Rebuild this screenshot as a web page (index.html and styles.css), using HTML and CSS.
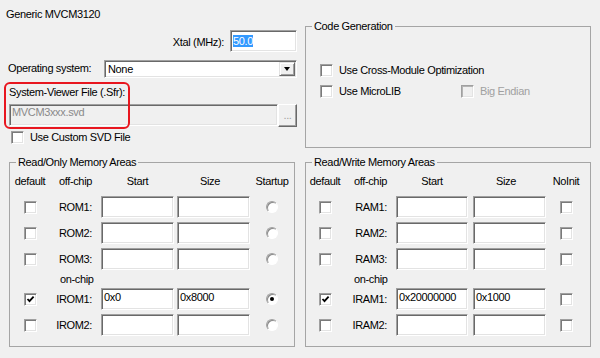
FILE: index.html
```html
<!DOCTYPE html>
<html lang="en">
<head>
    <meta charset="UTF-8">
    <title>Options for Target - Device</title>
    <link rel="stylesheet" href="styles.css">
</head>
<body>
<div class="dialog">
    <div class="top">
        <div class="target">
            <div class="device">Generic MVCM3120</div>

            <div class="xtal-row">
                <span class="xtal-label">Xtal (MHz):</span>
                <div class="field xtal"><span class="selected">50.0</span></div>
            </div>

            <div class="os-row">
                <span class="os-label">Operating system:</span>
                <div class="select">
                    <span class="select-value">None</span>
                    <span class="select-btn"><span class="arrow"></span></span>
                </div>
            </div>

            <div class="svf-label">System-Viewer File (.Sfr):</div>
            <div class="svf-row">
                <div class="field disabled svf-path">MVCM3xxx.svd</div>
                <div class="browse">...</div>
            </div>

            <div class="check-row svd">
                <span class="checkbox"></span><span>Use Custom SVD File</span>
            </div>

            <!-- annotation around the SVD file box -->
            <div class="callout"></div>
        </div>

        <fieldset class="group codegen">
            <legend>Code Generation</legend>
            <div class="opts">
                <div class="check-row">
                    <span class="checkbox"></span><span>Use Cross-Module Optimization</span>
                </div>
                <div class="opt-line">
                    <div class="check-row micro">
                        <span class="checkbox"></span><span>Use MicroLIB</span>
                    </div>
                    <div class="check-row off">
                        <span class="checkbox"></span><span>Big Endian</span>
                    </div>
                </div>
            </div>
        </fieldset>
    </div>

    <div class="memory">
        <fieldset class="group mem ro">
            <legend>Read/Only Memory Areas</legend>
            <div class="mem-grid">
                <div class="hd c-def">default</div>
                <div class="hd c-name">off-chip</div>
                <div class="hd c-start">Start</div>
                <div class="hd c-size">Size</div>
                <div class="hd c-opt">Startup</div>

                <div class="c-def"><span class="checkbox"></span></div>
                <div class="name">ROM1:</div>
                <div class="c-start"><div class="field"></div></div>
                <div class="c-size"><div class="field"></div></div>
                <div class="c-opt"><span class="radio"></span></div>

                <div class="c-def"><span class="checkbox"></span></div>
                <div class="name">ROM2:</div>
                <div class="c-start"><div class="field"></div></div>
                <div class="c-size"><div class="field"></div></div>
                <div class="c-opt"><span class="radio"></span></div>

                <div class="c-def"><span class="checkbox"></span></div>
                <div class="name">ROM3:</div>
                <div class="c-start"><div class="field"></div></div>
                <div class="c-size"><div class="field"></div></div>
                <div class="c-opt"><span class="radio"></span></div>

                <div class="onchip">on-chip</div>

                <div class="c-def"><span class="checkbox on"><svg width="9" height="9" viewBox="0 0 9 9"><path d="M1.5 4 L3.5 6.2 L7.6 1.6" fill="none" stroke="#000" stroke-width="1.8"/></svg></span></div>
                <div class="name">IROM1:</div>
                <div class="c-start"><div class="field">0x0</div></div>
                <div class="c-size"><div class="field">0x8000</div></div>
                <div class="c-opt"><span class="radio on"></span></div>

                <div class="c-def"><span class="checkbox"></span></div>
                <div class="name">IROM2:</div>
                <div class="c-start"><div class="field"></div></div>
                <div class="c-size"><div class="field"></div></div>
                <div class="c-opt"><span class="radio"></span></div>
            </div>
        </fieldset>

        <fieldset class="group mem rw">
            <legend>Read/Write Memory Areas</legend>
            <div class="mem-grid">
                <div class="hd c-def">default</div>
                <div class="hd c-name">off-chip</div>
                <div class="hd c-start">Start</div>
                <div class="hd c-size">Size</div>
                <div class="hd c-opt">NoInit</div>

                <div class="c-def"><span class="checkbox"></span></div>
                <div class="name">RAM1:</div>
                <div class="c-start"><div class="field"></div></div>
                <div class="c-size"><div class="field"></div></div>
                <div class="c-opt"><span class="checkbox"></span></div>

                <div class="c-def"><span class="checkbox"></span></div>
                <div class="name">RAM2:</div>
                <div class="c-start"><div class="field"></div></div>
                <div class="c-size"><div class="field"></div></div>
                <div class="c-opt"><span class="checkbox"></span></div>

                <div class="c-def"><span class="checkbox"></span></div>
                <div class="name">RAM3:</div>
                <div class="c-start"><div class="field"></div></div>
                <div class="c-size"><div class="field"></div></div>
                <div class="c-opt"><span class="checkbox"></span></div>

                <div class="onchip">on-chip</div>

                <div class="c-def"><span class="checkbox on"><svg width="9" height="9" viewBox="0 0 9 9"><path d="M1.5 4 L3.5 6.2 L7.6 1.6" fill="none" stroke="#000" stroke-width="1.8"/></svg></span></div>
                <div class="name">IRAM1:</div>
                <div class="c-start"><div class="field">0x20000000</div></div>
                <div class="c-size"><div class="field">0x1000</div></div>
                <div class="c-opt"><span class="checkbox"></span></div>

                <div class="c-def"><span class="checkbox"></span></div>
                <div class="name">IRAM2:</div>
                <div class="c-start"><div class="field"></div></div>
                <div class="c-size"><div class="field"></div></div>
                <div class="c-opt"><span class="checkbox"></span></div>
            </div>
        </fieldset>
    </div>
</div>
</body>
</html>
```

FILE: styles.css
```css
* {
    margin: 0;
    padding: 0;
    box-sizing: border-box;
}

body {
    background: #f0f0f0;
    font-family: "Liberation Sans", Arial, sans-serif;
    font-size: 11px;
    line-height: 13px;
    letter-spacing: -0.35px;
    color: #000;
    width: 600px;
    height: 358px;
    overflow: hidden;
}

/* sunken 3D edit box */
.field {
    height: 22px;
    background: #fff;
    border: 1px solid;
    border-color: #a0a0a0 #fff #fff #a0a0a0;
    box-shadow: inset 1px 1px 0 #696969, inset -1px -1px 0 #e3e3e3;
    padding: 2px 2px 0;
    white-space: nowrap;
    overflow: hidden;
}

.field.disabled {
    background: #f0f0f0;
    color: #8a8a8a;
}

.checkbox {
    width: 13px;
    height: 13px;
    flex: none;
    display: flex;
    align-items: center;
    justify-content: center;
    background: #fff;
    border: 1px solid;
    border-color: #a0a0a0 #fff #fff #a0a0a0;
    box-shadow: inset 1px 1px 0 #7a7a7a, inset -1px -1px 0 #e3e3e3;
}

.radio {
    display: block;
    position: relative;
    width: 12px;
    height: 12px;
    border-radius: 50%;
    background: #fff;
    border: 1px solid;
    border-color: #a0a0a0 #fff #fff #a0a0a0;
    box-shadow: inset 1px 1px 0 #8a8a8a;
}

.radio.on::after {
    content: "";
    position: absolute;
    left: 3px;
    top: 3px;
    width: 4px;
    height: 4px;
    border-radius: 50%;
    background: #000;
}

.check-row {
    display: flex;
    align-items: center;
    gap: 6px;
    height: 13px;
    white-space: nowrap;
}

/* top area */
.top {
    display: grid;
    grid-template-columns: 305px 286px;
    height: 148px;
}

.target {
    position: relative;
}

.device {
    margin: 8px 0 0 6px;
}

.xtal-row {
    display: flex;
    justify-content: flex-end;
    align-items: flex-start;
    margin-top: 9px;
    padding-right: 8px;
}

.xtal-label {
    margin: 6px 6px 0 0;
}

.xtal {
    width: 67px;
    padding-top: 4px;
}

.selected {
    display: inline-block;
    vertical-align: top;
    line-height: 12px;
    background: #3399ff;
    color: #fff;
}

.os-row {
    display: flex;
    align-items: flex-start;
    margin-top: 8px;
    padding: 0 8px;
}

.os-label {
    margin-top: 2px;
}

.select {
    margin-left: auto;
    width: 193px;
    height: 18px;
    display: flex;
    padding: 1px;
    background: #fff;
    border: 1px solid;
    border-color: #a0a0a0 #fff #fff #a0a0a0;
    box-shadow: inset 1px 1px 0 #696969, inset -1px -1px 0 #e3e3e3;
}

.select-value {
    flex: 1;
    padding: 1px 0 0 2px;
}

.select-btn {
    width: 16px;
    height: 14px;
    display: flex;
    align-items: center;
    justify-content: center;
    background: #f0f0f0;
    border: 1px solid;
    border-color: #e3e3e3 #696969 #696969 #e3e3e3;
    box-shadow: inset 1px 1px 0 #fff, inset -1px -1px 0 #a0a0a0;
}

.arrow {
    width: 0;
    height: 0;
    border-left: 3.5px solid transparent;
    border-right: 3.5px solid transparent;
    border-top: 4px solid #000;
}

.svf-label {
    margin: 8px 0 0 9px;
}

.svf-row {
    display: flex;
    margin-top: 5px;
    padding-left: 9px;
}

.svf-path {
    width: 269px;
    padding: 1px 2px 0;
}

.browse {
    width: 19px;
    height: 23px;
    padding-top: 4px;
    text-align: center;
    color: #a0a0a0;
    background: #f0f0f0;
    border: 1px solid;
    border-color: #fff #696969 #696969 #fff;
    box-shadow: inset -1px -1px 0 #a0a0a0;
}

.svd {
    margin-top: 4px;
    padding-left: 11px;
}

.callout {
    position: absolute;
    left: 4px;
    top: 82px;
    width: 126px;
    height: 47px;
    border: 2px solid #e8161f;
    border-radius: 6px;
}

/* group boxes */
.group {
    border: 1px solid #a5a5a5;
    padding: 0;
    margin: 0;
    min-width: 0;
}

.group legend {
    margin-left: 6px;
    padding: 0 2px;
    line-height: 13px;
}

.codegen {
    margin-top: 20px;
    height: 128px;
}

.opts {
    display: flex;
    flex-direction: column;
    gap: 8px;
    padding: 31px 0 0 14px;
}

.opt-line {
    display: flex;
}

.micro {
    width: 141px;
}

.off {
    color: #a0a0a0;
}

.off .checkbox {
    background: #f0f0f0;
    box-shadow: inset 1px 1px 0 #b4b4b4, inset -1px -1px 0 #e3e3e3;
}

/* memory areas */
.memory {
    display: grid;
    grid-template-columns: 286px 286px;
    column-gap: 10px;
    padding-left: 9px;
    margin-top: 8px;
}

.mem {
    height: 191px;
}

.mem-grid {
    display: grid;
    grid-template-rows: 19px 26px 26px 26px 14px 26px 26px;
    align-items: center;
    padding-top: 6px;
}

.ro .mem-grid {
    grid-template-columns: 40px 51px 76px 73px 44px;
}

.rw .mem-grid {
    grid-template-columns: 38px 52px 77px 73px 40px;
}

.hd {
    align-self: start;
    white-space: nowrap;
}

.c-def,
.c-opt {
    display: flex;
    justify-content: center;
}

.hd.c-name {
    text-align: right;
    padding-right: 9px;
}

.hd.c-start {
    text-align: center;
    padding-right: 3px;
}

.rw .hd.c-start {
    padding-right: 5px;
}

.hd.c-size {
    text-align: center;
    padding-right: 7px;
}

.name {
    text-align: right;
    padding-right: 9px;
    white-space: nowrap;
}

.c-start .field,
.c-size .field {
    width: 73px;
}

.rw .c-start .field {
    width: 72px;
}

.onchip {
    grid-column: 2 / -1;
    padding-left: 10px;
}
```
